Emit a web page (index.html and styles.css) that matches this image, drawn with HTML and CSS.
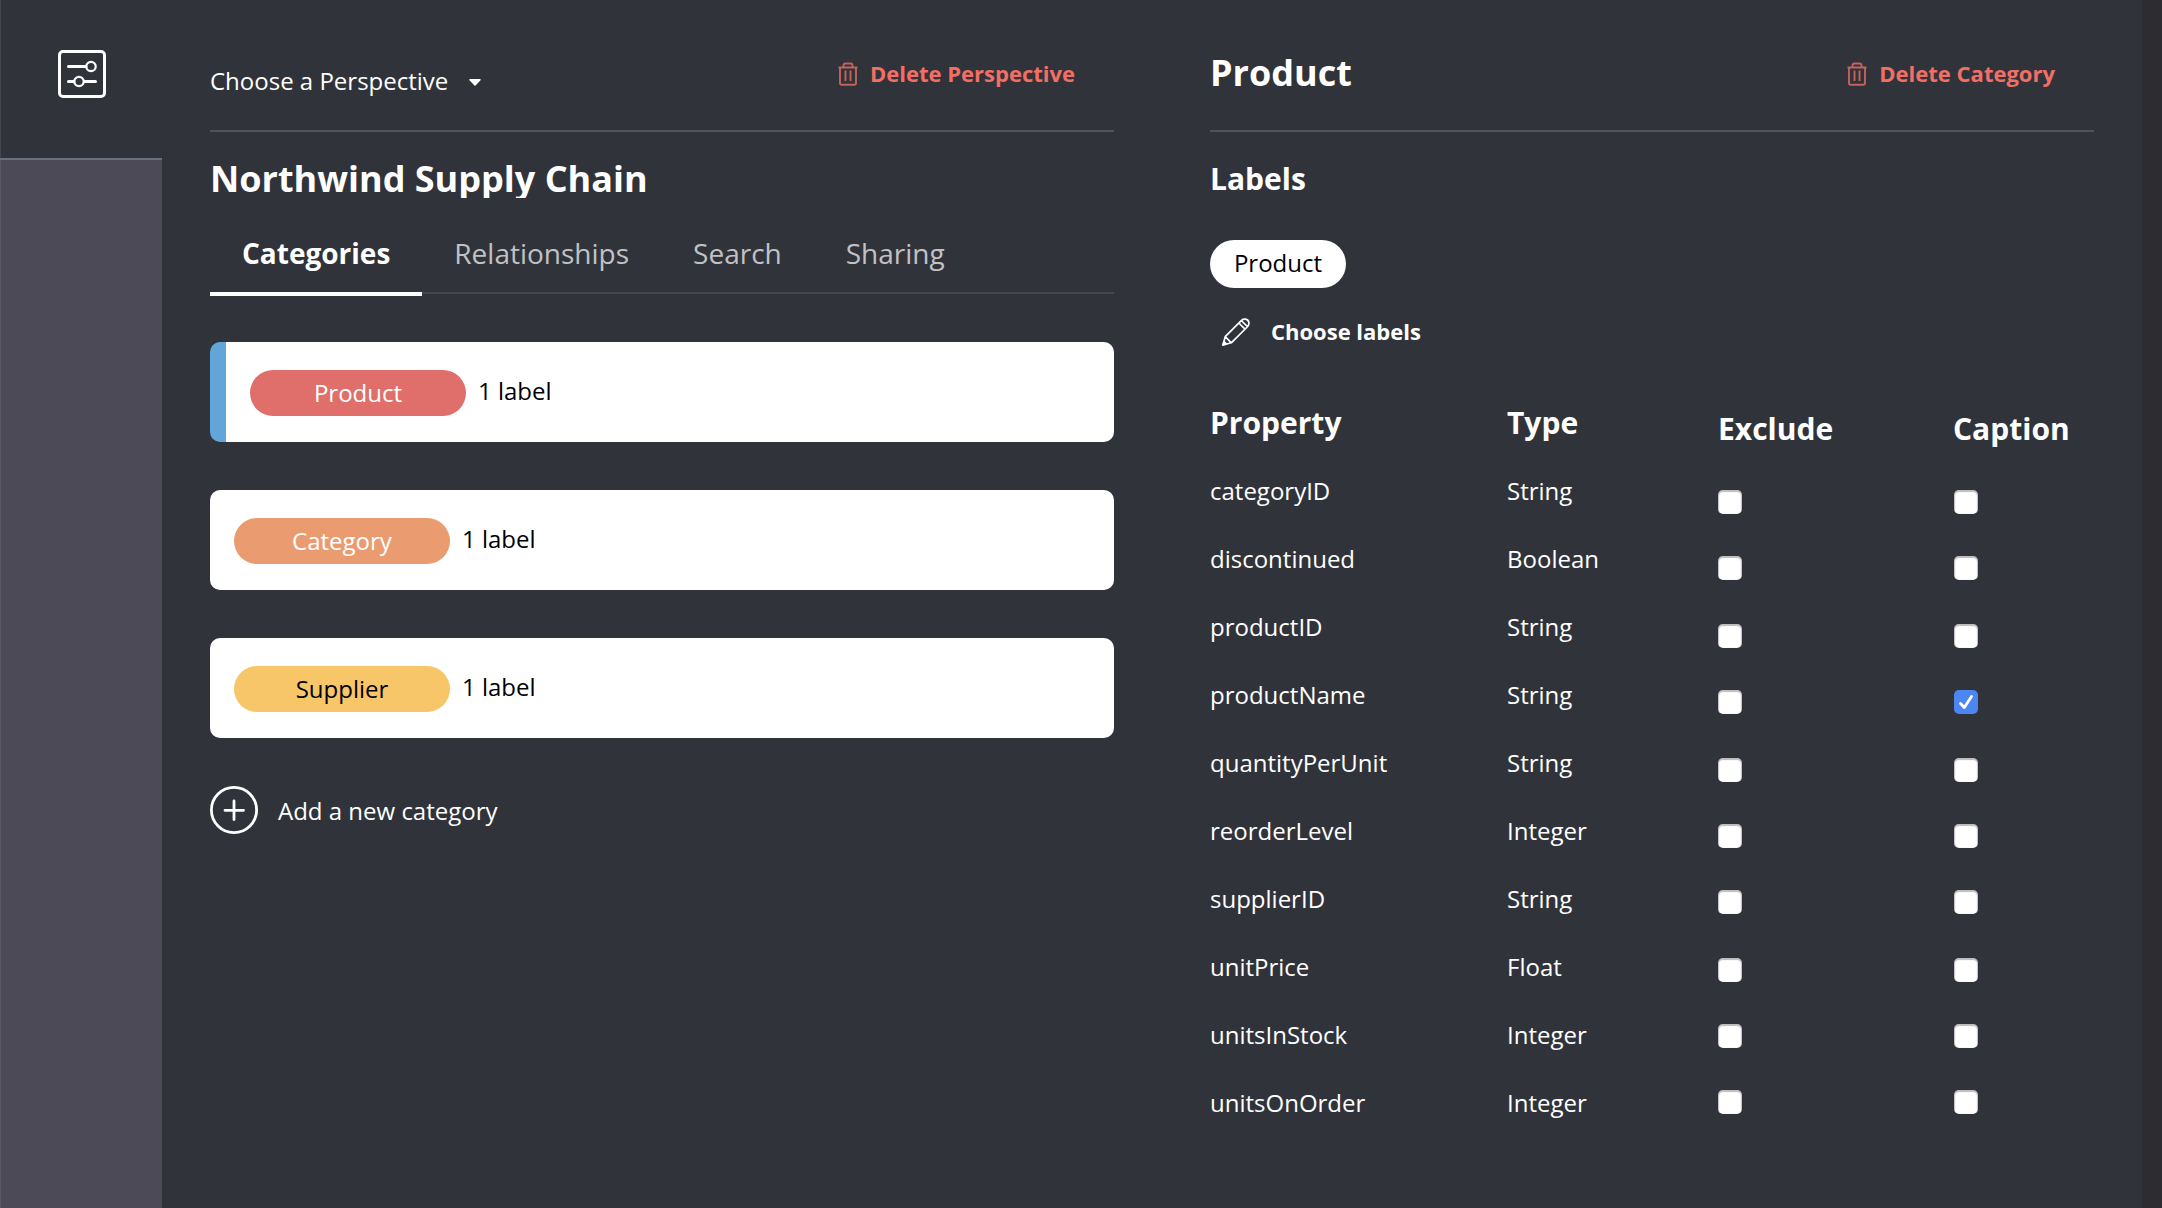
FILE: index.html
```html
<!DOCTYPE html>
<html lang="en">
<head>
<meta charset="utf-8">
<title>Perspectives</title>
<link rel="stylesheet" href="styles.css">
</head>
<body>
<svg class="sprite" width="0" height="0">
  <symbol id="trash" viewBox="0 0 20 24">
    <path d="M0.500 5.500h19M5.500 5V3.500q0-2 2-2h5q2 0 2 2V5M2 5.500v15.500q0 1.700 1.700 1.700h12.600q1.700 0 1.700-1.700V5.500M7.500 8.500v10.500M12.500 8.500v10.500" fill="none" stroke="currentColor" stroke-width="1.900"/>
  </symbol>
</svg>
<div class="app">
  <aside class="rail">
    <div class="rail-item">
      <svg width="48" height="48" viewBox="0 0 48 48" fill="none" stroke="#fff" stroke-width="3">
        <rect x="1.500" y="1.500" width="45" height="45" rx="3.500"/>
        <path d="M10.500 16.500H28M10.500 31.500H16M26.500 31.500H37.500" stroke-linecap="round"/>
        <circle cx="33" cy="16.500" r="4.700" stroke-width="2.200"/>
        <circle cx="21" cy="31.500" r="4.700" stroke-width="2.200"/>
      </svg>
    </div>
  </aside>
  <main class="perspective">
    <header class="bar">
      <div class="chooser">Choose a Perspective<svg class="caret" width="14" height="9" viewBox="0 0 14 9"><path d="M2 1.800H12L7 7Z" fill="#fff" stroke="#fff" stroke-width="1.500" stroke-linejoin="round"/></svg></div>
      <button class="delete"><svg width="20" height="24"><use href="#trash"/></svg>Delete Perspective</button>
    </header>
    <h1 class="title">Northwind Supply Chain</h1>
    <nav class="tabs">
      <a class="tab active">Categories</a><a class="tab">Relationships</a><a class="tab">Search</a><a class="tab">Sharing</a>
    </nav>
    <div class="cards">
      <div class="card selected"><span class="pill red">Product</span><span class="count">1 label</span></div>
      <div class="card"><span class="pill orange">Category</span><span class="count">1 label</span></div>
      <div class="card"><span class="pill yellow">Supplier</span><span class="count">1 label</span></div>
    </div>
    <div class="add">
      <svg width="48" height="48" viewBox="0 0 48 48" fill="none" stroke="#fff" stroke-width="2.800" stroke-linecap="round">
        <circle cx="24" cy="24" r="22.600"/><path d="M24 15V33.500M15 24.300H33.500"/>
      </svg>
      <span>Add a new category</span>
    </div>
  </main>
  <section class="detail">
    <header class="bar">
      <h2 class="name">Product</h2>
      <button class="delete"><svg width="20" height="24"><use href="#trash"/></svg>Delete Category</button>
    </header>
    <h3 class="labels-title">Labels</h3>
    <span class="chip">Product</span>
    <div class="choose">
      <svg width="28" height="28" viewBox="0 0 28 28" fill="none" stroke="#fff" stroke-width="1.700" stroke-linejoin="round">
        <path d="M1 27L3.200 18.700L19.500 2.300Q21.200 0.800 23.500 1.200Q26.400 1.800 26.900 4.500Q27.200 6.800 25.700 8.500L9.300 24.800ZM3.200 18.700L9.300 24.800M16.800 5L23 11.200M19.300 2.500L25.500 8.700"/>
        <path d="M1 27L2 23.500L4.500 26Z" fill="#fff"/>
      </svg>
      <span>Choose labels</span>
    </div>
    <div class="props">
      <div class="col">
        <h4>Property</h4>
        <p>categoryID</p><p>discontinued</p><p>productID</p><p>productName</p><p>quantityPerUnit</p><p>reorderLevel</p><p>supplierID</p><p>unitPrice</p><p>unitsInStock</p><p>unitsOnOrder</p>
      </div>
      <div class="col">
        <h4>Type</h4>
        <p>String</p><p>Boolean</p><p>String</p><p>String</p><p>String</p><p>Integer</p><p>String</p><p>Float</p><p>Integer</p><p>Integer</p>
      </div>
      <div class="col checks">
        <h4>Exclude</h4>
        <i class="box"></i><i class="box"></i><i class="box"></i><i class="box"></i><i class="box"></i><i class="box"></i><i class="box"></i><i class="box"></i><i class="box"></i><i class="box"></i>
      </div>
      <div class="col checks captions">
        <h4>Caption</h4>
        <i class="box"></i><i class="box"></i><i class="box"></i><i class="box on"><svg width="24" height="24" viewBox="0 0 24 24" fill="none" stroke="#fff" stroke-width="2.800" stroke-linecap="round" stroke-linejoin="round"><path d="M6.500 13.500L10.300 17.500L17.500 6.500"/></svg></i><i class="box"></i><i class="box"></i><i class="box"></i><i class="box"></i><i class="box"></i><i class="box"></i>
      </div>
    </div>
  </section>
  <div class="gutter"></div>
</div>
</body>
</html>
```
FILE: styles.css
```css
* { box-sizing: border-box; margin: 0; padding: 0; }
body {
  background: #31333b;
  color: #fff;
  font: 24px/34px "Open Sans", sans-serif;
  height: 1208px;
  overflow: hidden;
}
.sprite { display: block; width: 0; height: 0; }
svg { display: block; flex: none; }
.app { display: flex; height: 1208px; }

.rail { width: 162px; background: #4d4a57; box-shadow: inset 1px 0 #5a5863; }
.rail-item {
  height: 160px;
  padding: 50px 0 0 58px;
  background: #31333b;
  border-bottom: 2px solid #68717b;
  box-shadow: inset 1px 0 #43454b;
}

.perspective { width: 952px; padding-left: 48px; }
.bar {
  display: flex;
  justify-content: space-between;
  height: 132px;
  border-bottom: 2px solid #515255;
}
.chooser { display: flex; padding-top: 64px; }
.caret { margin: 14px 0 0 20px; }
.delete {
  display: flex;
  gap: 12px;
  align-items: flex-start;
  margin: 61px 39px 0 0;
  height: 26px;
  border: 0;
  background: none;
  color: #f16f64;
  font: bold 22px/24px "Open Sans", sans-serif;
  white-space: nowrap;
}
.delete svg { margin-top: 1px; color: #c3635b; }

.title {
  height: 42px;
  margin-top: 24px;
  overflow: hidden;
  font-size: 36px;
  line-height: 46px;
}
.tabs {
  display: flex;
  height: 98px;
  margin-bottom: 46px;
  background: linear-gradient(#45474c, #45474c) 0 94px / 100% 2px no-repeat;
}
.tab {
  padding: 35px 32px 0;
  font-size: 28px;
  line-height: 40px;
  color: #c1c2c4;
}
.active { color: #fff; font-weight: bold; border-bottom: 4px solid #fff; }

.cards { display: grid; gap: 48px; }
.card {
  display: flex;
  height: 100px;
  padding: 28px 24px;
  border-radius: 10px;
  background: #fff;
  color: #000;
  overflow: hidden;
}
.selected { border-left: 16px solid #62a6d9; }
.pill {
  width: 216px;
  height: 46px;
  border-radius: 23px;
  line-height: 46px;
  text-align: center;
  color: #fff;
}
.red { background: #e06f6c; }
.orange { background: #ea9c70; }
.yellow { background: #f7c669; color: #000; }
.count { margin: 4px 0 0 12px; }
.add { display: flex; gap: 20px; margin-top: 48px; }
.add span { padding-top: 8px; }

.detail { width: 884px; margin-left: 96px; }
.name { font-size: 36px; line-height: 48px; padding-top: 49px; }
.labels-title { font-size: 30px; line-height: 40px; margin-top: 27px; }
.chip {
  display: block;
  width: 136px;
  height: 48px;
  margin-top: 41px;
  border-radius: 24px;
  background: #fff;
  color: #000;
  line-height: 46px;
  text-align: center;
}
.choose {
  display: flex;
  gap: 21px;
  height: 28px;
  margin: 30px 0 0 12px;
  font-size: 22px;
  font-weight: bold;
  line-height: 26px;
}
.props {
  display: grid;
  grid-template-columns: 297px 211px 236px 140px;
  margin-top: 57px;
}
.col h4 { font-size: 30px; line-height: 40px; margin-bottom: 31px; }
.col p { height: 34px; margin-bottom: 34px; }
.checks { padding-top: 6px; }
.checks h4 { margin-bottom: 41px; }
.captions h4 { margin-left: -1px; }
.box {
  display: block;
  width: 24px;
  height: 24px;
  margin-bottom: 42px;
  border-radius: 5px;
  background: #fff;
  box-shadow: inset 0 1px 1px 1px rgba(70, 62, 62, 0.35);
}
.box:nth-child(3), .box:nth-child(5), .box:nth-child(8) { margin-bottom: 44px; }
.on { background: #4b86f2; box-shadow: none; }
.gutter { margin-left: auto; width: 20px; background: #2d2d31; }
```
